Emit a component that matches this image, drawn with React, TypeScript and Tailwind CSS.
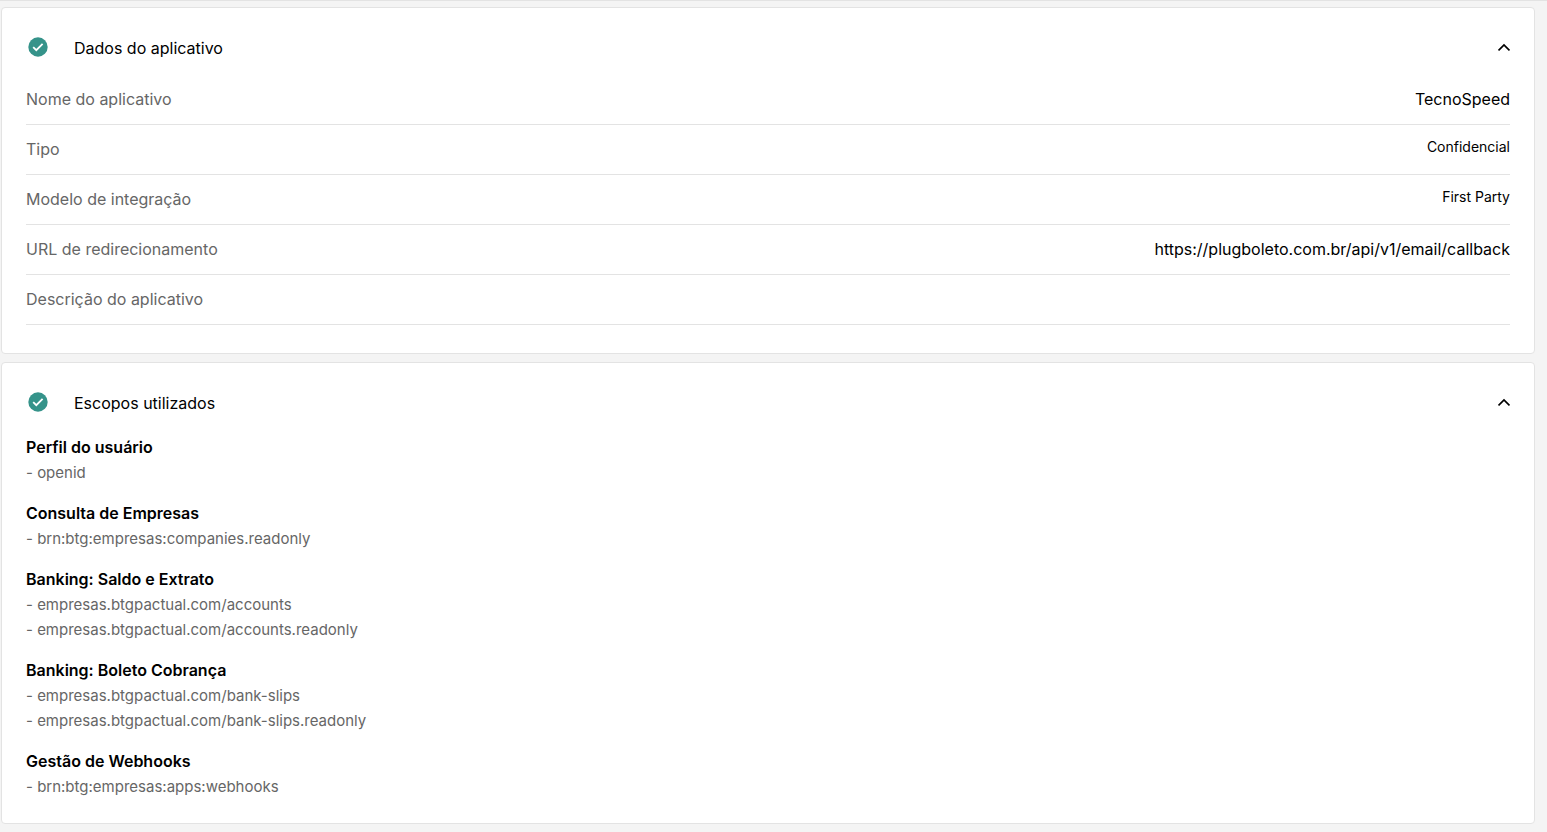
import { useState, type ReactNode } from 'react';

const appData = [
  { label: 'Nome do aplicativo', value: 'TecnoSpeed' },
  { label: 'Tipo', value: 'Confidencial', small: true },
  { label: 'Modelo de integração', value: 'First Party', small: true },
  { label: 'URL de redirecionamento', value: 'https://plugboleto.com.br/api/v1/email/callback' },
  { label: 'Descrição do aplicativo', value: '' },
];

const scopes = [
  { title: 'Perfil do usuário', items: ['openid'] },
  { title: 'Consulta de Empresas', items: ['brn:btg:empresas:companies.readonly'] },
  {
    title: 'Banking: Saldo e Extrato',
    items: ['empresas.btgpactual.com/accounts', 'empresas.btgpactual.com/accounts.readonly'],
  },
  {
    title: 'Banking: Boleto Cobrança',
    items: ['empresas.btgpactual.com/bank-slips', 'empresas.btgpactual.com/bank-slips.readonly'],
  },
  { title: 'Gestão de Webhooks', items: ['brn:btg:empresas:apps:webhooks'] },
];

function CheckIcon() {
  return (
    <svg viewBox="0 0 24 24" className="mb-[3px] size-6" aria-hidden="true">
      <circle cx="12" cy="12" r="9.7" fill="#35938a" />
      <path d="M7.2 12.2l3.1 3 6.3-6.3" fill="none" stroke="#fff" strokeWidth="1.8" />
    </svg>
  );
}

function ChevronIcon({ open }: { open: boolean }) {
  return (
    <svg
      viewBox="0 0 12 12"
      className={open ? 'size-3' : 'size-3 rotate-180'}
      fill="none"
      stroke="currentColor"
      strokeWidth="1.8"
      aria-hidden="true"
    >
      <path d="M0.5 8.4L6 2.9l5.5 5.5" />
    </svg>
  );
}

function Panel({ title, children }: { title: string; children: ReactNode }) {
  const [open, setOpen] = useState(true);

  return (
    <section className="rounded border border-[#e3e3e3] bg-white p-6">
      <h2>
        <button
          type="button"
          aria-expanded={open}
          onClick={() => setOpen(!open)}
          className="flex h-8 w-full cursor-pointer items-center text-left"
        >
          <CheckIcon />
          <span className="ml-6 flex-1">{title}</span>
          <ChevronIcon open={open} />
        </button>
      </h2>
      {open && children}
    </section>
  );
}

export default function App() {
  return (
    <main className="min-h-screen border-t border-[#e3e3e3] bg-[#f4f4f4] pt-1.5 pr-3 pb-2 pl-px font-['Inter',sans-serif] text-base text-black">
      <div className="flex flex-col gap-2">
        <Panel title="Dados do aplicativo">
          <dl className="mt-[11px] mb-1">
            {appData.map((row) => (
              <div
                key={row.label}
                className="flex h-[50px] items-start justify-between border-b border-[#e3e3e3] pt-3"
              >
                <dt className="text-[#666666]">{row.label}</dt>
                <dd className={row.small ? 'text-sm' : ''}>{row.value}</dd>
              </div>
            ))}
          </dl>
        </Panel>

        <Panel title="Escopos utilizados">
          <div className="mt-4 flex flex-col gap-4 leading-[25px]">
            {scopes.map((scope) => (
              <div key={scope.title}>
                <h3 className="font-semibold">{scope.title}</h3>
                <ul className="text-[15px] text-[#666666]">
                  {scope.items.map((item) => (
                    <li key={item}>- {item}</li>
                  ))}
                </ul>
              </div>
            ))}
          </div>
        </Panel>
      </div>
    </main>
  );
}
